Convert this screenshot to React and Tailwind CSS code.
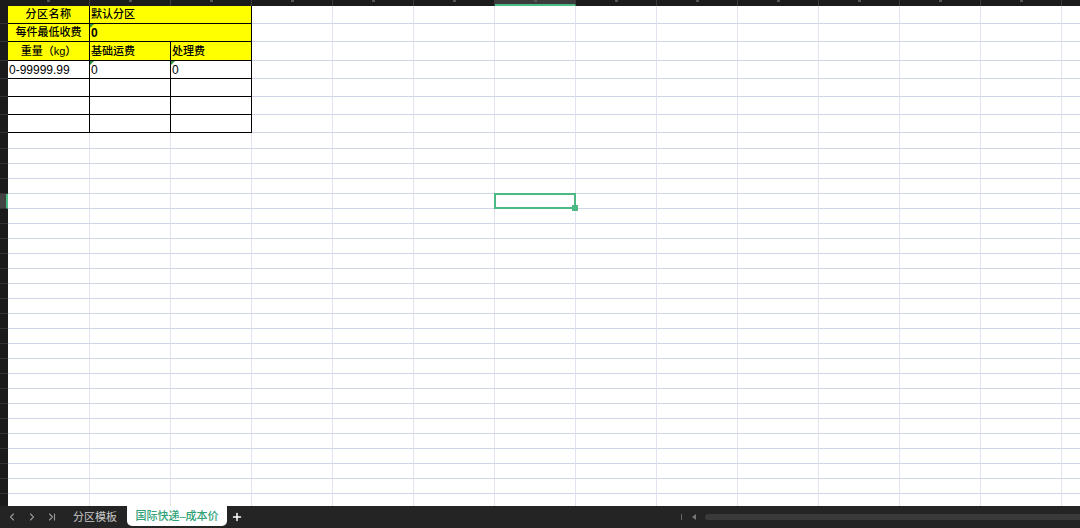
import React from 'react';
import { ChevronLeft, ChevronRight, ChevronLast, Plus } from 'lucide-react';

const FONT = "font-['Liberation_Sans','Noto_Sans_CJK_SC',sans-serif]";
const TOTAL_COLS = 14;
const ACTIVE_COL = 6;
const ACTIVE_ROW = 12;

// plain rows below the rate table (row number, height class)
const plainRows = Array.from({ length: 26 }, (_, i) => ({
  n: 8 + i,
  h: i === 0 ? 'h-[16px]' : 'h-[15px]',
}));

const colWidth = (i) => (i === 0 ? 'w-[82px]' : 'w-[81px]');

const RowHead = ({ active }) => (
  <div
    className={`w-[8px] shrink-0 border-b border-b-[#333] ${
      active ? 'bg-[#444] border-r-2 border-r-[#4cb884]' : 'bg-[#1b1b1b]'
    }`}
  />
);

const GridCell = ({ w, selected }) => (
  <div className={`relative ${w} shrink-0 border-r border-b border-r-[#e0e4ef] border-b-[#cfd5e7] bg-white`}>
    {selected && (
      <div className="absolute -left-px -top-px -right-px -bottom-px border-2 border-[#4cb884] z-10">
        <div className="absolute -right-[4px] -bottom-[4px] w-[6px] h-[6px] bg-[#4cb884]" />
      </div>
    )}
  </div>
);

const GridFill = ({ from, row }) => (
  <>
    {Array.from({ length: TOTAL_COLS - from }, (_, i) => (
      <GridCell
        key={i}
        w={colWidth(from + i)}
        selected={row === ACTIVE_ROW && from + i === ACTIVE_COL}
      />
    ))}
  </>
);

const Tick = () => (
  <span className="absolute left-0 top-0 w-0 h-0 border-t-[4px] border-r-[4px] border-t-[#2f8f3a] border-r-transparent" />
);

const TCell = ({ w = 'w-[81px]', yellow, center, bold, tick, className = '', children }) => {
  const weight = bold ? 'font-bold' : yellow ? 'font-medium' : '';
  return (
    <div
      className={`relative ${w} shrink-0 border-r border-b border-black flex items-center overflow-hidden whitespace-nowrap text-black ${
        yellow ? 'bg-[#ffff00]' : 'bg-white'
      } ${center ? 'justify-center' : 'pl-[1px]'} ${weight} ${className}`}
    >
      {tick && <Tick />}
      {children}
    </div>
  );
};

export default function App() {
  return (
    <div className={`w-[1080px] h-[528px] flex flex-col bg-[#1b1b1b] overflow-hidden ${FONT}`}>
      {/* column header strip */}
      <div className="flex h-[6px] shrink-0 bg-[#1b1b1b]">
        <div className="w-[8px] shrink-0" />
        {Array.from({ length: TOTAL_COLS }, (_, i) => (
          <div
            key={i}
            className={`${colWidth(i)} shrink-0 border-r border-r-[#3a3a3a] flex justify-center ${
              i === ACTIVE_COL ? 'bg-[#3b3b3b] border-b-2 border-b-[#4cb884]' : ''
            }`}
          >
            <div className="w-[3px] h-[2px] bg-[#555]" />
          </div>
        ))}
      </div>

      {/* sheet body */}
      <div className="flex-1 flex flex-col overflow-hidden bg-white">
        <div className="flex h-[18px] shrink-0 text-[11px]">
          <RowHead />
          <TCell yellow center w="w-[82px]" className="tracking-[0.5px]">分区名称</TCell>
          <TCell yellow w="w-[162px]">默认分区</TCell>
          <GridFill from={3} row={1} />
        </div>
        <div className="flex h-[18px] shrink-0 text-[11px]">
          <RowHead />
          <TCell yellow center w="w-[82px]">每件最低收费</TCell>
          <TCell yellow bold tick w="w-[162px]" className="text-[12px]">0</TCell>
          <GridFill from={3} row={2} />
        </div>
        <div className="flex h-[19px] shrink-0 text-[11px]">
          <RowHead />
          <TCell yellow center w="w-[82px]">重量（kg）</TCell>
          <TCell yellow>基础运费</TCell>
          <TCell yellow>处理费</TCell>
          <GridFill from={3} row={3} />
        </div>
        <div className="flex h-[18px] shrink-0 text-[12px]">
          <RowHead />
          <TCell w="w-[82px]">0-99999.99</TCell>
          <TCell tick>0</TCell>
          <TCell tick>0</TCell>
          <GridFill from={3} row={4} />
        </div>
        {[5, 6, 7].map((n) => (
          <div key={n} className="flex h-[18px] shrink-0">
            <RowHead />
            <TCell w="w-[82px]" />
            <TCell />
            <TCell />
            <GridFill from={3} row={n} />
          </div>
        ))}
        {plainRows.map((r) => (
          <div key={r.n} className={`flex ${r.h} shrink-0`}>
            <RowHead active={r.n === ACTIVE_ROW} />
            <GridFill from={0} row={r.n} />
          </div>
        ))}
      </div>

      {/* sheet tabs */}
      <div className="flex items-center h-[22px] shrink-0 bg-[#242424] text-[11px]">
        <div className="flex items-center gap-[8px] pl-[6px] text-[#9a9a9a]">
          <ChevronLeft size={12} strokeWidth={2.2} />
          <ChevronRight size={12} strokeWidth={2.2} />
          <ChevronLast size={12} strokeWidth={2.2} />
        </div>
        <span className="ml-[15px] text-[#c9c9c9]">分区模板</span>
        <div className="ml-[10px] self-start h-[20px] w-[100px] flex items-center justify-center bg-white rounded-b-[5px] text-[#2fa277] font-medium">
          国际快递–成本价
        </div>
        <Plus size={12} strokeWidth={3} className="ml-[4px] text-white" />
        <div className="ml-auto flex items-center w-[399px]">
          <div className="w-px h-[6px] bg-[#666]" />
          <div className="ml-[10px] w-0 h-0 border-y-[3px] border-y-transparent border-r-[4px] border-r-[#777]" />
          <div className="ml-[9px] flex-1 h-[6px] rounded-l-full bg-[#3a3a3a]" />
        </div>
      </div>
    </div>
  );
}
